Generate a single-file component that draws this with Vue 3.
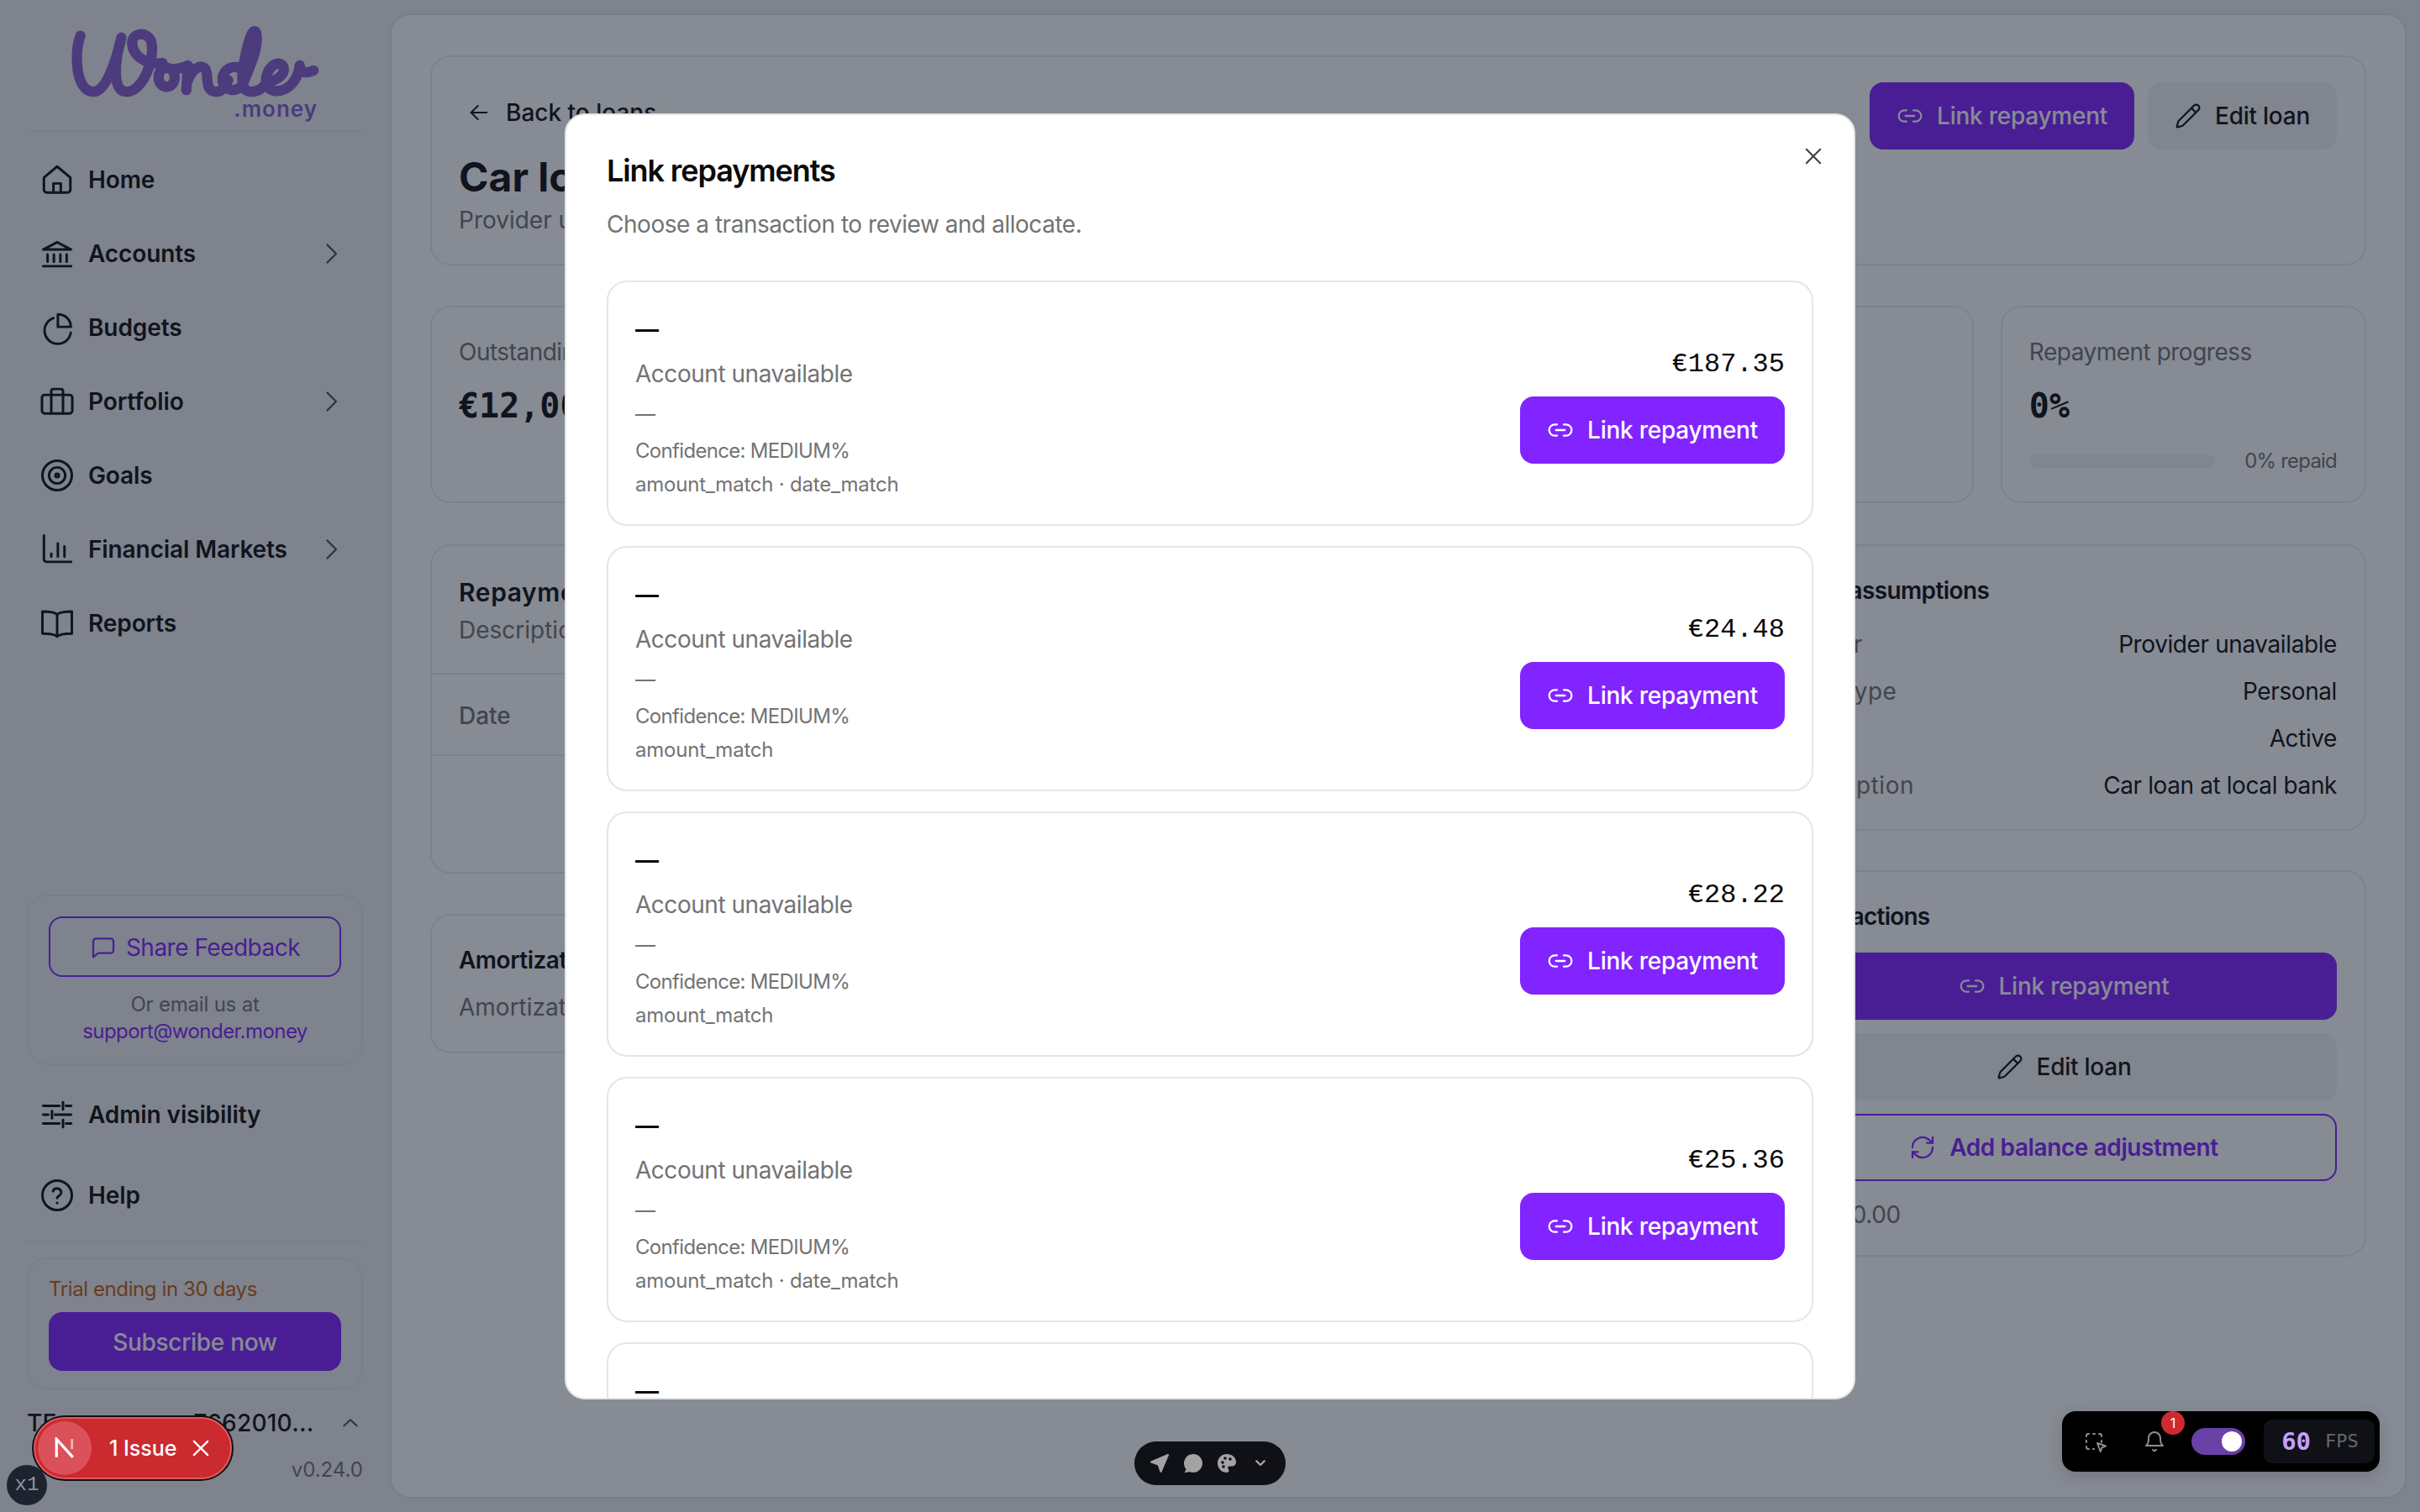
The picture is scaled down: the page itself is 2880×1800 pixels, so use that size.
<script setup>
import { h } from 'vue'

const icons = {
  home: ['M3 10.500 12 3l9 7.500v8.200a2 2 0 0 1-2 2H5a2 2 0 0 1-2-2z', 'M9.500 20.700v-6.200h5v6.200'],
  bank: ['M2.500 9.200h19L12 4.200z', 'M5.500 12.500v5', 'M9.800 12.500v5', 'M14.200 12.500v5', 'M18.500 12.500v5', 'M2.500 20.500h19'],
  pie: ['M9.500 5.500a9 9 0 1 0 11.800 10', 'M12.500 3a8.500 8.500 0 0 1 8.800 8.500h-8.800z'],
  case: ['M3.500 7.500h17a1.800 1.800 0 0 1 1.800 1.800v9a1.800 1.800 0 0 1-1.800 1.800h-17a1.800 1.800 0 0 1-1.800-1.800v-9a1.800 1.800 0 0 1 1.800-1.800z', 'M8 20V5a1.500 1.500 0 0 1 1.500-1.500h5A1.500 1.500 0 0 1 16 5v15'],
  target: ['M12 2a10 10 0 1 0 0 20 10 10 0 0 0 0-20z', 'M12 6.500a5.500 5.500 0 1 0 0 11 5.500 5.500 0 0 0 0-11z', 'M12 10.800a1.200 1.200 0 1 0 0 2.400 1.200 1.200 0 0 0 0-2.400z'],
  chart: ['M3 2.500v16a2 2 0 0 0 2 2h16.500', 'M8 17v-2', 'M12.500 17v-9', 'M17 17v-7'],
  book: ['M12 6C10.500 4.500 8 4 2 4v15c6 0 8.500.5 10 2 1.500-1.500 4-2 10-2V4C16 4 13.500 4.500 12 6z', 'M12 6v15'],
  sliders: ['M2.500 6h11', 'M18 6h3.500', 'M16 3.500v5', 'M2.500 12h3.500', 'M10.500 12h11', 'M8.500 9.500v5', 'M2.500 18h11', 'M18 18h3.500', 'M16 15.500v5'],
  help: ['M12 2a10 10 0 1 0 0 20 10 10 0 0 0 0-20z', 'M9.200 9.200a2.900 2.900 0 0 1 5.600 1c0 1.900-2.800 2.400-2.800 3.600', 'M12 17.200v.1'],
  chev: ['M9 5l7 7-7 7'],
  up: ['M5 15l7-6.500 7 6.500'],
  msg: ['M3 6.500A2.500 2.500 0 0 1 5.500 4h13A2.500 2.500 0 0 1 21 6.500v8a2.500 2.500 0 0 1-2.500 2.500H7.500L3 20.500z'],
  link: ['M9 17H7A5 5 0 0 1 7 7h2', 'M15 7h2a5 5 0 0 1 0 10h-2', 'M8 12h8'],
  pencil: ['M21.200 6.800a2.800 2.800 0 0 0-4-4L3.700 16.300a2 2 0 0 0-.5.8l-1.200 4.300a.5.5 0 0 0 .6.6l4.300-1.200a2 2 0 0 0 .8-.5z', 'M15 5l4 4'],
  refresh: ['M3 12a9 9 0 0 1 15-6.700L21 8', 'M21 3v5h-5', 'M21 12a9 9 0 0 1-15 6.700L3 16', 'M8 16H3v5'],
  arrow: ['M20 12H4', 'M11 5l-7 7 7 7'],
  x: ['M5 5l14 14', 'M19 5 5 19'],
}
const Ic = (props) => h('svg', { viewBox: '0 0 24 24', fill: 'none', stroke: 'currentColor', 'stroke-width': props.w || 1.700, 'stroke-linecap': 'round', 'stroke-linejoin': 'round' }, icons[props.n].map((d) => h('path', { d })))
Ic.props = ['n', 'w']

const nav = [
  { t: 'Home', i: 'home' },
  { t: 'Accounts', i: 'bank', c: true },
  { t: 'Budgets', i: 'pie' },
  { t: 'Portfolio', i: 'case', c: true },
  { t: 'Goals', i: 'target' },
  { t: 'Financial Markets', i: 'chart', c: true },
  { t: 'Reports', i: 'book' },
]
const stats = [
  { l: 'Outstanding balance', v: '€12,000.00' },
  { l: 'Original', v: '€0' },
  { l: 'Rate', v: '0%' },
  { l: 'Next', v: '—' },
]
const assumptions = [
  ['Lender', 'Provider unavailable'],
  ['Loan type', 'Personal'],
  ['Status', 'Active'],
  ['Description', 'Car loan at local bank'],
]
const matches = [
  { a: '€187.35', r: 'amount_match · date_match' },
  { a: '€24.48', r: 'amount_match' },
  { a: '€28.22', r: 'amount_match' },
  { a: '€25.36', r: 'amount_match · date_match' },
  { a: '€25.36', r: 'amount_match' },
]
</script>

<template>
  <div class="app">
    <aside class="side">
      <div class="logo">
        <svg class="script" viewBox="76 24 312 102" role="img" aria-label="Wonder">
          <g fill="none" stroke="#895fd0" stroke-width="12.500" stroke-linecap="round" stroke-linejoin="round">
            <path d="M92 42C84 62 86 110 108 110C124 110 136 70 142 44C134 70 130 110 148 110C168 110 184 70 178 48C172 36 156 38 155 50C155 66 172 78 192 75" />
            <path d="M197 81C184 81 184 104 197 104C210 104 210 81 197 81C205 84 214 82 223 78L221 108" />
            <path d="M223 96C230 78 244 74 246 88C247 100 246 110 258 110C264 110 268 104 272 96" />
            <path d="M290 84C278 74 264 84 265 96C266 110 284 112 290 100C298 80 310 56 306 38C302 30 296 50 292 70C288 90 286 110 300 110C308 110 314 106 320 98" />
            <path d="M320 98C334 96 344 86 338 78C330 70 318 84 318 96C318 110 334 114 348 102C354 96 358 88 359 78C360 84 362 90 376 84" />
          </g>
        </svg>
        <span class="money">.money</span>
      </div>
      <nav class="nav">
        <div v-for="n in nav" :key="n.t" class="item">
          <Ic :n="n.i" class="ic" />
          <span>{{ n.t }}</span>
          <Ic v-if="n.c" n="chev" class="chev" :w="1.600" />
        </div>
      </nav>
      <div class="foot">
        <div class="fb">
          <div class="fb-btn"><Ic n="msg" class="ic-s" />Share Feedback</div>
          <div class="fb-or">Or email us at</div>
          <div class="fb-mail">support@wonder.money</div>
        </div>
        <div class="item admin"><Ic n="sliders" class="ic" /><span>Admin visibility</span></div>
        <div class="item help"><Ic n="help" class="ic" /><span>Help</span></div>
        <div class="rule"></div>
        <div class="trial">
          <div class="trial-t">Trial ending in 30 days</div>
          <div class="sub">Subscribe now</div>
        </div>
        <div class="user"><span class="uname">TEmporary us 7662010...</span><Ic n="up" class="up" :w="2" /></div>
        <div class="ver">v0.24.0</div>
      </div>
    </aside>

    <main class="panel">
      <section class="card head">
        <div class="head-l">
          <div class="back"><Ic n="arrow" class="back-ic" /><span>Back to loans</span></div>
          <h1>Car loan</h1>
          <p>Provider unavailable</p>
        </div>
        <div class="head-r">
          <div class="btn pri"><Ic n="link" class="ic-b" />Link repayment</div>
          <div class="btn sec"><Ic n="pencil" class="ic-b" />Edit loan</div>
        </div>
      </section>

      <section class="stats">
        <div v-for="s in stats" :key="s.l" class="card stat">
          <div class="lab">{{ s.l }}</div>
          <div class="val">{{ s.v }}</div>
        </div>
        <div class="card stat">
          <div class="lab">Repayment progress</div>
          <div class="val">0%</div>
          <div class="prog"><div class="bar"></div><span>0% repaid</span></div>
        </div>
      </section>

      <section class="cols">
        <div class="col-l">
          <div class="card rep">
            <div class="rep-h"><h2 class="strong">Repayment history</h2><p>Description of repayments</p></div>
            <div class="rep-th">Date</div>
            <div class="rep-b"></div>
          </div>
          <div class="card amo"><h2>Amortization</h2><p>Amortization schedule</p></div>
        </div>
        <div class="col-r">
          <div class="card asm">
            <h2 class="t-asm">Loan assumptions</h2>
            <div class="rows">
              <div v-for="r in assumptions" :key="r[0]" class="row"><span class="k">{{ r[0] }}</span><span class="v">{{ r[1] }}</span></div>
            </div>
          </div>
          <div class="card act">
            <h2 class="t-act">Quick actions</h2>
            <div class="acts">
              <div class="btn pri"><Ic n="link" class="ic-b" />Link repayment</div>
              <div class="btn sec"><Ic n="pencil" class="ic-b" />Edit loan</div>
              <div class="btn out"><Ic n="refresh" class="ic-b" />Add balance adjustment</div>
            </div>
            <div class="note">Net: €0.00</div>
          </div>
        </div>
      </section>
    </main>

    <div class="overlay"></div>

    <div class="modal">
      <Ic n="x" class="close" :w="1.800" />
      <h3>Link repayments</h3>
      <p class="m-sub">Choose a transaction to review and allocate.</p>
      <div class="list">
        <div v-for="(m, i) in matches" :key="i" class="tx">
          <div class="tx-l">
            <div class="d1">—</div>
            <div class="acc">Account unavailable</div>
            <div class="d2">—</div>
            <div class="conf">Confidence: MEDIUM%</div>
            <div class="why">{{ m.r }}</div>
          </div>
          <div class="tx-r">
            <div class="amt">{{ m.a }}</div>
            <div class="btn vio"><Ic n="link" class="ic-b" />Link repayment</div>
          </div>
        </div>
      </div>
    </div>

    <div class="dock">
      <svg viewBox="0 0 24 24"><path d="M22 2 2 10.500l8.500 3 3 8.500z" fill="#a3a3a3" stroke="#a3a3a3" stroke-width="2" stroke-linejoin="round" /></svg>
      <svg viewBox="0 0 24 24"><path d="M12 1a11 11 0 1 1-4.800 20.900c-1.500.8-3.500 1.100-5.700 1.100 1-1 1.800-2.500 1.900-4.200A11 11 0 0 1 12 1z" fill="#a3a3a3" /></svg>
      <svg viewBox="0 0 24 24"><path d="M12 1C5.900 1 1 5.900 1 12s4.900 11 11 11c1.600 0 2.500-1 2.500-2.300 0-.7-.3-1.200-.7-1.700-.4-.5-.6-1-.6-1.500 0-1.200 1-2 2.300-2h2.500c3.300 0 5-2.200 5-5C23 4.900 18 1 12 1z" fill="#a3a3a3" /><circle cx="7" cy="11" r="1.800" fill="#0f1117" /><circle cx="10" cy="6" r="1.800" fill="#0f1117" /><circle cx="16" cy="7" r="1.800" fill="#0f1117" /><circle cx="8" cy="16" r="1.800" fill="#0f1117" /></svg>
      <svg class="dock-c" viewBox="0 0 24 24"><path d="M5 8l7 7 7-7" fill="none" stroke="#a3a3a3" stroke-width="3.500" stroke-linecap="round" stroke-linejoin="round" /></svg>
    </div>

    <div class="tools">
      <svg class="t-sel" viewBox="0 0 28 28" fill="none" stroke="#8f8f8f" stroke-width="2" stroke-linecap="round" stroke-linejoin="round"><path d="M3 6V5a2 2 0 0 1 2-2h1M11 3h2M18 3h1a2 2 0 0 1 2 2v1M21 11v2M3 11v2M3 18v1a2 2 0 0 0 2 2h1M11 21h1" /><path d="M16 14l10 3.500-4.500 1.800-1.800 4.700z" /></svg>
      <svg class="t-bell" viewBox="0 0 28 28" fill="none" stroke="#8f8f8f" stroke-width="2" stroke-linecap="round" stroke-linejoin="round"><path d="M4 20c2-2 3-3 3-9a7 7 0 0 1 14 0c0 6 1 7 3 9z" /><path d="M12 25a3 3 0 0 0 4 0" /></svg>
      <span class="t-badge">1</span>
      <div class="t-tog"><i></i></div>
      <div class="t-fps"><b>60</b><span>FPS</span></div>
    </div>

    <div class="x1">x1</div>
    <div class="pill">
      <span class="pill-n"><svg viewBox="0 0 24 24"><path d="M3 22V2l18 20" fill="none" stroke="#fff" stroke-width="3" /><path d="M20 2v11" stroke="#fff" stroke-opacity=".6" stroke-width="2.500" /></svg></span>
      <span class="pill-t">1 Issue</span>
      <Ic n="x" class="pill-x" :w="2" />
    </div>
  </div>
</template>

<style>
html, body { margin: 0; background: #efeff0; }
</style>

<style scoped>
.app { width: 2880px; height: 1800px; display: flex; overflow: hidden; position: relative; background: #efeff0; font-family: Inter, "Liberation Sans", sans-serif; font-size: 28px; line-height: 40px; color: #111; }
h1, h2, h3, p { margin: 0; }

.side { width: 464px; flex: none; box-sizing: border-box; padding: 0 32px 34px; display: flex; flex-direction: column; }
.logo { height: 157px; box-sizing: border-box; border-bottom: 2px solid #e5e5e5; position: relative; }
.script { position: absolute; left: 48px; top: 25px; width: 305px; height: 100px; }
.money { position: absolute; right: 54px; top: 115px; line-height: 30px; font-size: 26px; font-weight: 600; color: #895fd0; letter-spacing: 1px; }
.nav { margin-top: 12px; display: flex; flex-direction: column; }
.item { height: 88px; box-sizing: border-box; padding: 2px 14px 0 15px; display: flex; align-items: center; font-weight: 600; gap: 16px; letter-spacing: -.1px; }
.ic { width: 42px; height: 42px; flex: none; }
.chev { width: 36px; height: 36px; margin-left: auto; margin-right: 6px; color: #525252; }
.foot { margin-top: auto; display: flex; flex-direction: column; }
.fb { height: 203px; box-sizing: border-box; border: 2px solid #e5e5e5; border-radius: 24px; padding: 24px 24px 22px; text-align: center; }
.fb-btn { height: 72px; box-sizing: border-box; padding-top: 2px; border: 2px solid #8224ff; border-radius: 16px; color: #8224ff; display: flex; align-items: center; justify-content: center; gap: 11px; font-weight: 400; letter-spacing: -.5px; }
.ic-s { width: 32px; height: 32px; }
.fb-or { margin-top: 17px; font-size: 24px; line-height: 32px; color: #737373; letter-spacing: -.2px; }
.fb-mail { font-size: 24px; line-height: 32px; color: #8224ff; letter-spacing: -.55px; }
.admin { margin-top: 14px; }
.help { margin-top: 8px; }
.rule { margin-top: 11px; border-top: 2px solid #e5e5e5; }
.trial { margin-top: 18px; height: 157px; box-sizing: border-box; border: 2px solid #e5e5e5; border-radius: 24px; padding: 20px 24px 18px; }
.trial-t { font-size: 24px; line-height: 32px; color: #c2600f; letter-spacing: -.4px; }
.sub { margin-top: 11px; height: 70px; box-sizing: border-box; padding-top: 2px; border-radius: 16px; background: #8224ff; color: #fff; display: flex; align-items: center; justify-content: center; font-weight: 500; letter-spacing: -.3px; }
.user { margin-top: 16px; height: 48px; display: flex; align-items: center; justify-content: space-between; font-weight: 500; }
.uname { white-space: nowrap; font-size: 28px; letter-spacing: .25px; }
.up { width: 26px; height: 26px; color: #525252; margin-right: 2px; flex: none; }
.ver { margin-top: 16px; line-height: 32px; font-size: 24px; text-align: right; color: #737373; }

.panel { margin: 16px 16px 16px 0; flex: 1; box-sizing: border-box; background: #fff; border: 2px solid #e5e5e5; border-radius: 24px; padding: 48px 46px; display: flex; flex-direction: column; gap: 48px; }
.card { box-sizing: border-box; border: 2px solid #ebebeb; border-radius: 24px; background: #fff; }
.head { display: flex; justify-content: space-between; align-items: flex-start; padding: 30px 33px 32px 32px; }
.head-l { display: flex; flex-direction: column; }
.back { height: 64px; display: flex; align-items: center; gap: 18px; padding-left: 10px; margin-top: 4px; font-weight: 500; }
.back-ic { width: 28px; height: 28px; }
h1 { font-size: 48px; line-height: 56px; font-weight: 700; margin-top: 17px; }
.head-l p { color: #737373; margin-top: 3px; }
.head-r { display: flex; gap: 16px; }
.btn { height: 80px; box-sizing: border-box; border-radius: 16px; display: flex; align-items: center; justify-content: center; gap: 16px; padding: 0 32px; white-space: nowrap; font-weight: 500; letter-spacing: -.25px; }
.ic-b { width: 32px; height: 32px; flex: none; }
.pri { background: #8224ff; color: #fff; }
.sec { background: #f3f3f3; color: #111; }
.out { border: 2px solid #8224ff; color: #8224ff; font-weight: 600; letter-spacing: -.4px; }
.vio { background: #8224ff; color: #fff; }

.stats { display: grid; grid-template-columns: repeat(5, 1fr); gap: 32px; }
.stat { padding: 33px 33px 33px 32px; height: 235px; }
.lab { color: #737373; white-space: nowrap; letter-spacing: -.5px; }
.val { margin-top: 16px; font-family: "DejaVu Sans Mono", monospace; font-size: 40px; line-height: 56px; font-weight: 700; white-space: nowrap; }
.prog { margin-top: 22px; display: flex; align-items: center; justify-content: space-between; font-size: 24px; line-height: 32px; color: #737373; letter-spacing: -.8px; }
.bar { width: 222px; height: 16px; border-radius: 8px; background: #f3f3f3; }

.cols { display: grid; grid-template-columns: 1fr 731px; gap: 32px; align-items: start; margin-top: 1px; }
.col-l { display: flex; flex-direction: column; gap: 48px; }
.col-r { display: flex; flex-direction: column; gap: 47px; }
h2 { font-size: 28px; line-height: 40px; font-weight: 600; letter-spacing: -.5px; }
h2.strong { font-size: 30px; letter-spacing: .6px; }
h2.t-asm { letter-spacing: -.6px; margin-left: 10px; }
h2.t-act { letter-spacing: -.78px; margin-left: 2px; }
.rep-h { padding: 35px 32px 31px; border-bottom: 2px solid #ebebeb; }
.rep-h p, .amo p { color: #737373; margin-top: 5px; white-space: nowrap; }
.rep-th { height: 97px; box-sizing: border-box; padding: 29px 32px 0; color: #737373; border-bottom: 2px solid #ebebeb; font-weight: 500; }
.rep-b { height: 138px; }
.amo { padding: 33px 32px 33px; }
.amo p { margin-top: 16px; }
.asm { padding: 33px 33px 32px; }
.rows { margin-top: 24px; display: flex; flex-direction: column; gap: 16px; }
.row { display: flex; justify-content: space-between; }
.k { color: #737373; letter-spacing: .5px; margin-left: 1px; }
.v { letter-spacing: -.4px; }
.act { padding: 33px 33px 28px; }
.acts { margin-top: 23px; margin-left: 11px; display: flex; flex-direction: column; gap: 16px; }
.note { margin-top: 20px; margin-left: 5px; color: #737373; letter-spacing: -.4px; }

.overlay { position: absolute; inset: 0; background: rgba(15, 23, 42, .5); }

.modal { position: absolute; left: 672px; top: 135px; width: 1536px; height: 1531px; box-sizing: border-box; background: #fff; border: 2px solid #e5e5e5; border-radius: 24px; padding: 44px 48px 0; display: flex; flex-direction: column; overflow: hidden; }
.close { position: absolute; right: 34px; top: 35px; width: 28px; height: 28px; color: #404040; }
h3 { font-size: 36px; line-height: 44px; font-weight: 600; color: #0a0a0a; letter-spacing: -1.100px; }
.m-sub { margin-top: 22px; color: #737373; letter-spacing: -.47px; }
.list { margin-top: 47px; flex: 1; display: flex; flex-direction: column; gap: 24px; overflow: hidden; }
.tx { flex: none; height: 292px; box-sizing: border-box; border: 2px solid #e5e5e5; border-radius: 24px; padding: 34px 32px; display: flex; justify-content: space-between; align-items: center; }
.tx-l { display: flex; flex-direction: column; padding-top: 4px; }
.d1 { font-weight: 600; color: #0a0a0a; }
.acc { margin-top: 13px; color: #737373; letter-spacing: -.47px; }
.d2 { margin-top: 12px; font-size: 24px; line-height: 32px; color: #737373; }
.conf { margin-top: 12px; font-size: 24px; line-height: 32px; color: #737373; letter-spacing: -.68px; }
.why { margin-top: 8px; font-size: 24px; line-height: 32px; color: #737373; letter-spacing: -.22px; }
.tx-r { display: flex; flex-direction: column; align-items: flex-end; gap: 18px; padding-top: 2px; }
.amt { font-family: "Liberation Mono", monospace; font-size: 32px; line-height: 40px; padding-top: 3px; color: #0a0a0a; }

.dock { position: absolute; left: 1350px; top: 1716px; width: 180px; height: 52px; box-sizing: border-box; padding-right: 4px; border-radius: 26px; background: #0f1117; display: flex; align-items: center; justify-content: center; gap: 16px; }
.dock svg { width: 24px; height: 24px; }
.dock-c { width: 16px !important; height: 16px !important; margin-left: 4px; }

.tools { position: absolute; left: 2454px; top: 1680px; width: 378px; height: 72px; border-radius: 16px; background: #000; box-shadow: 0 6px 20px rgba(0, 0, 0, .15); }
.t-sel { position: absolute; left: 26px; top: 24px; width: 28px; height: 28px; }
.t-bell { position: absolute; left: 96px; top: 20px; width: 28px; height: 30px; }
.t-badge { position: absolute; left: 118px; top: 0; width: 28px; height: 28px; border-radius: 50%; background: #cf2a2f; color: #fff; font-size: 16px; line-height: 28px; text-align: center; }
.t-tog { position: absolute; left: 154px; top: 20px; width: 64px; height: 32px; border-radius: 16px; background: #6941a8; }
.t-tog i { position: absolute; right: 4px; top: 4px; width: 24px; height: 24px; border-radius: 50%; background: #fff; }
.t-fps { position: absolute; left: 240px; top: 10px; width: 132px; height: 52px; border-radius: 10px; background: #0f1117; display: flex; align-items: center; justify-content: center; gap: 17px; padding-left: 2px; box-sizing: border-box; font-family: "DejaVu Sans Mono", monospace; line-height: 52px; }
.t-fps b { color: #c4a1ff; font-size: 29px; }
.t-fps span { color: #666; font-size: 22px; }

.x1 { position: absolute; left: 8px; top: 1744px; width: 48px; height: 48px; border-radius: 50%; background: #1e2330; color: #8f939c; font-family: "Liberation Mono", monospace; font-size: 24px; line-height: 48px; text-align: center; }
.pill { position: absolute; left: 40px; top: 1687px; width: 236px; height: 74px; box-sizing: border-box; border-radius: 37px; background: #cb2a2f; border: 2px solid #e05a5f; box-shadow: 0 0 0 2px #111; color: #fff; display: flex; align-items: center; }
.pill-n { margin-left: 3px; width: 64px; height: 64px; border-radius: 50%; background: #db5159; display: flex; align-items: center; justify-content: center; flex: none; }
.pill-n svg { width: 26px; height: 26px; }
.pill-t { margin-left: 21px; font-size: 25px; font-weight: 500; white-space: nowrap; }
.pill-x { margin-left: 14px; width: 28px; height: 28px; flex: none; }
</style>
